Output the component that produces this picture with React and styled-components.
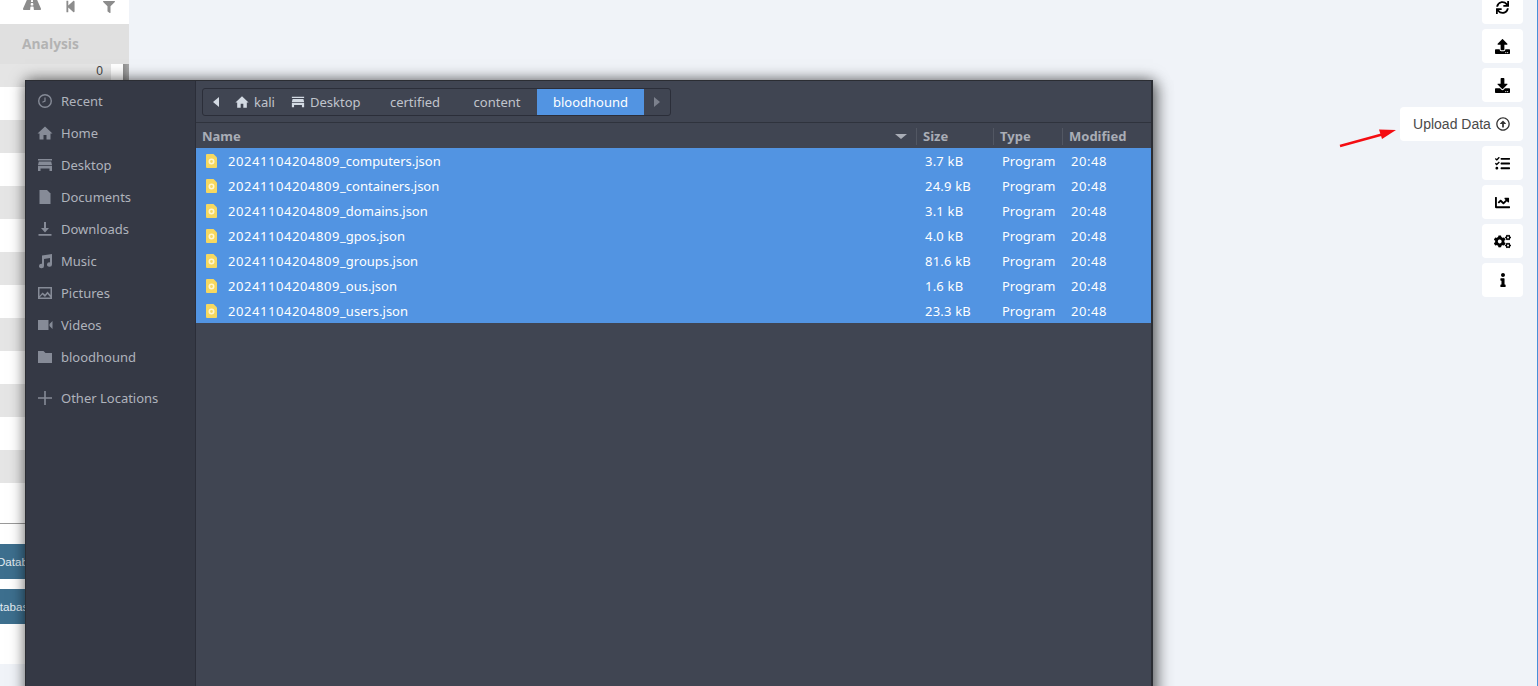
import React from 'react';
import styled, { createGlobalStyle } from 'styled-components';
import {
  FaRoad,
  FaStepBackward,
  FaFilter,
  FaSync,
  FaUpload,
  FaDownload,
  FaRegArrowAltCircleUp,
  FaTasks,
  FaChartLine,
  FaCogs,
  FaInfo,
} from 'react-icons/fa';

const GlobalStyle = createGlobalStyle`
  html, body {
    margin: 0;
    padding: 0;
    background: #f0f3f8;
    overflow: hidden;
  }
`;

const Page = styled.div`
  position: relative;
  display: flex;
  justify-content: space-between;
  align-items: flex-start;
  height: 686px;
  overflow: hidden;
  background: #f0f3f8;
  border-right: 1px solid #4a90d9;
  box-sizing: border-box;
  font-family: "Liberation Sans", Arial, sans-serif;
`;

/* left BloodHound panel */
const Panel = styled.div`
  width: 129px;
  height: 664px;
  background: #fff;
  overflow: hidden;
`;

const IconStrip = styled.div`
  display: flex;
  gap: 23px;
  align-items: flex-end;
  height: 24px;
  padding: 0 14px 11px 23px;
  box-sizing: border-box;
  color: #8c8c8c;

  svg {
    display: block;
    flex: none;
  }

  svg:last-child {
    margin-left: auto;
  }
`;

const PanelTitle = styled.div`
  display: flex;
  align-items: center;
  height: 40px;
  padding: 0 0 2px 22px;
  box-sizing: border-box;
  background: #e0e0e0;
  color: #b3b3b3;
  font-family: "Open Sans", sans-serif;
  font-size: 13.8px;
  font-weight: 700;
`;

const TableArea = styled.div`
  display: flex;
  height: 419px;
`;

const Stripes = styled.div`
  width: 111px;
  flex: none;
`;

const Stripe = styled.div`
  height: ${p => (p.$first ? 23 : 33)}px;
  background: ${p => (p.$gray ? '#e5e5e5' : '#fff')};
  box-sizing: border-box;
  padding: 1px 8px 0 0;
  text-align: right;
  color: #444;
  font-size: 12px;
  line-height: 12px;
`;

const Thumb = styled.div`
  width: 6px;
  height: 20px;
  margin-left: 12px;
  background: linear-gradient(90deg, #8f8f8f, #a8a8a8);
`;

const Divider = styled.div`
  height: 1px;
  margin-top: 40px;
  background: #999;
`;

const DbButtons = styled.div`
  display: flex;
  flex-direction: column;
  gap: 10px;
  padding-top: 20px;
`;

const DbButton = styled.div`
  display: flex;
  align-items: center;
  height: 35px;
  padding-bottom: 1px;
  box-sizing: border-box;
  background: #3d6f8e;
  color: #e4edf3;
  font-size: 11.6px;
  white-space: nowrap;

  span {
    margin-left: ${p => p.$shift}px;
  }
`;

/* right toolbar */
const Toolbar = styled.div`
  display: flex;
  flex-direction: column;
  align-items: flex-end;
  gap: 5px;
  margin-top: -10px;
  padding-right: 14px;
`;

const ToolButton = styled.div`
  display: flex;
  align-items: center;
  justify-content: center;
  gap: 5px;
  width: ${p => (p.$wide ? 123 : 41)}px;
  height: 34px;
  background: #fff;
  border-radius: 4px;
  color: ${p => (p.$wide ? '#4a4a4a' : '#000')};
  font-size: 14px;

  svg {
    color: ${p => (p.$wide ? '#333' : '#000')};
  }
`;

const Arrow = styled.svg`
  position: absolute;
  left: 1338px;
  top: 126px;
`;

/* GTK file chooser lying over the page */
const Dialog = styled.div`
  position: absolute;
  left: 25px;
  top: 80px;
  width: 1128px;
  height: 640px;
  display: flex;
  box-sizing: border-box;
  background: #404552;
  border: 1px solid #2b2d33;
  border-right-width: 2px;
  box-shadow: 0 0 14px rgba(0, 0, 0, 0.55), 6px 4px 14px rgba(0, 0, 0, 0.3);
  font-family: "Noto Sans", sans-serif;
  font-size: 13px;
`;

const Sidebar = styled.nav`
  width: 170px;
  flex: none;
  display: flex;
  flex-direction: column;
  padding-top: 4px;
  box-sizing: border-box;
  background: #353945;
  border-right: 1px solid #2b2e39;
`;

const Place = styled.div`
  display: flex;
  align-items: center;
  gap: 8px;
  height: 32px;
  padding-left: 11px;
  margin-top: ${p => (p.$separated ? 9 : 0)}px;
  color: #afb3bc;
  line-height: 1;

  svg {
    flex: none;
    width: 16px;
    height: 16px;
    fill: #868b97;
  }
`;

const Main = styled.div`
  flex: 1;
  min-width: 0;
`;

const PathArea = styled.div`
  height: 42px;
  padding: 7px 0 0 6px;
  box-sizing: border-box;
  border-bottom: 1px solid #2f333d;
`;

const PathBar = styled.div`
  display: inline-flex;
  height: 28px;
  box-sizing: border-box;
  border: 1px solid #2b2e39;
  border-radius: 3px;
  background: #404552;
`;

const Crumb = styled.div`
  display: flex;
  align-items: center;
  justify-content: ${p => (p.$icon ? 'flex-start' : 'center')};
  gap: 5px;
  width: ${p => p.$w}px;
  padding-left: ${p => p.$icon || 0}px;
  box-sizing: border-box;
  background: ${p => (p.$active ? '#5294e2' : 'transparent')};
  color: ${p => (p.$active ? '#fff' : '#c0c4cc')};

  svg {
    flex: none;
    fill: ${p => (p.$dim ? '#7c818d' : '#d3dae3')};
  }
`;

const Columns = styled.div`
  display: grid;
  grid-template-columns: 721px 77px 69px 1fr;
`;

const HeadRow = styled(Columns)`
  height: 25px;
  padding-top: 1px;
  box-sizing: border-box;
  align-items: center;
  color: #a9adb6;
  font-weight: 700;
`;

const HeadCell = styled.div`
  display: flex;
  align-items: center;
  justify-content: space-between;
  height: 17px;
  padding: 0 9px 0 6px;
  border-right: ${p => (p.$last ? 'none' : '1px solid #525763')};
  line-height: 1;
`;

const SortMark = styled.i`
  width: 0;
  height: 0;
  border-left: 6px solid transparent;
  border-right: 6px solid transparent;
  border-top: 5px solid #a9adb6;
`;

const FileRow = styled(Columns)`
  height: 25px;
  align-items: center;
  background: #5294e2;
  color: #fff;
`;

const NameCell = styled.div`
  display: flex;
  align-items: center;
  gap: 11px;
  padding-left: 10px;
`;

const Cell = styled.div`
  padding-left: 8px;
`;

/* the digits come out wider than the letters in the dialog's hinted font */
const Digits = styled.span`
  letter-spacing: 0.57px;
`;

const SizeCell = styled(Cell)`
  letter-spacing: 0.2px;
`;

const FileIcon = () => (
  <svg width="11" height="14" viewBox="0 0 11 14">
    <path d="M1 0h6.5L11 3.5V13a1 1 0 0 1-1 1H1a1 1 0 0 1-1-1V1a1 1 0 0 1 1-1z" fill="#f6d860" />
    <circle cx="5.5" cy="7.5" r="2.2" fill="none" stroke="#fff6d0" strokeWidth="1.6" />
  </svg>
);

const HomeIcon = ({ size = 16 }) => (
  <svg width={size} height={size} viewBox="0 0 16 16">
    <path d="M8 1.5L15.5 8.5H13.5V14.5H9.5V10H6.5V14.5H2.5V8.5H.5z" />
  </svg>
);

const DesktopIcon = ({ size = 16 }) => (
  <svg width={size} height={size} viewBox="0 0 16 16">
    <path d="M1 2h14v1.5H1zM1.8 4.5h12.4L15 8H1zM1 8.8h14V14h-2.5v-2.5h-9V14H1z" />
  </svg>
);

const places = [
  {
    label: 'Recent',
    icon: (
      <svg viewBox="0 0 16 16">
        <path fillRule="evenodd" d="M8 1a7 7 0 1 1 0 14A7 7 0 0 1 8 1zm0 1.4a5.6 5.6 0 1 0 0 11.2A5.6 5.6 0 0 0 8 2.4z" />
        <path d="M7.4 4.5h1.2v4l-3 1.2-.4-1 2.2-1z" />
      </svg>
    ),
  },
  { label: 'Home', icon: <HomeIcon /> },
  { label: 'Desktop', icon: <DesktopIcon /> },
  {
    label: 'Documents',
    icon: (
      <svg viewBox="0 0 16 16">
        <path d="M2.5 1h7.5l3.5 3.5V15h-11z" />
      </svg>
    ),
  },
  {
    label: 'Downloads',
    icon: (
      <svg viewBox="0 0 16 16">
        <path d="M7 1h2v6h3l-4 4.5L4 7h3zM1.5 13h13v1.8h-13z" />
      </svg>
    ),
  },
  {
    label: 'Music',
    icon: (
      <svg viewBox="0 0 16 16">
        <path d="M5 2.5L15 1v10.5a2.5 2.2 0 1 1-2-2.1V5L7 5.9v7a2.5 2.2 0 1 1-2-2.1z" />
      </svg>
    ),
  },
  {
    label: 'Pictures',
    icon: (
      <svg viewBox="0 0 16 16">
        <path fillRule="evenodd" d="M1 2h14v12H1zM2.5 3.5V11l3-3.5 2.5 2 2.5-3 3 3.5V3.5zM2.5 12.5h11L10.5 9 8 12 5.5 9.5z" />
      </svg>
    ),
  },
  {
    label: 'Videos',
    icon: (
      <svg viewBox="0 0 16 16">
        <path d="M1 3h10.5v10H1zM12.5 7l3-3v8l-3-3z" />
      </svg>
    ),
  },
  {
    label: 'bloodhound',
    icon: (
      <svg viewBox="0 0 16 16">
        <path d="M1 2h5.5l2 2H15v10H1z" />
      </svg>
    ),
  },
  {
    label: 'Other Locations',
    separated: true,
    icon: (
      <svg viewBox="0 0 16 16">
        <path d="M7.2 1h1.6v6.2H15v1.6H8.8V15H7.2V8.8H1V7.2h6.2z" />
      </svg>
    ),
  },
];

const files = [
  ['computers', '3.7 kB'],
  ['containers', '24.9 kB'],
  ['domains', '3.1 kB'],
  ['gpos', '4.0 kB'],
  ['groups', '81.6 kB'],
  ['ous', '1.6 kB'],
  ['users', '23.3 kB'],
];

const stripes = Array.from({ length: 13 }, (_, i) => i);

const App = () => {
  return (
    <Page>
      <GlobalStyle />
      <Panel>
        <IconStrip>
          <FaRoad size={18} />
          <FaStepBackward size={13} />
          <FaFilter size={12} />
        </IconStrip>
        <PanelTitle>Analysis</PanelTitle>
        <TableArea>
          <Stripes>
            {stripes.map(i => (
              <Stripe key={i} $first={i === 0} $gray={i % 2 === 0}>
                {i === 0 ? '0' : ''}
              </Stripe>
            ))}
          </Stripes>
          <Thumb />
        </TableArea>
        <Divider />
        <DbButtons>
          <DbButton $shift={-3}><span>Database</span></DbButton>
          <DbButton $shift={-15}><span>Database</span></DbButton>
        </DbButtons>
      </Panel>

      <Toolbar>
        <ToolButton><FaSync size={13} /></ToolButton>
        <ToolButton><FaUpload size={15} /></ToolButton>
        <ToolButton><FaDownload size={15} /></ToolButton>
        <ToolButton $wide>
          Upload Data <FaRegArrowAltCircleUp size={14} />
        </ToolButton>
        <ToolButton><FaTasks size={15} /></ToolButton>
        <ToolButton><FaChartLine size={15} /></ToolButton>
        <ToolButton><FaCogs size={17} /></ToolButton>
        <ToolButton><FaInfo size={14} /></ToolButton>
      </Toolbar>

      <Arrow width="60" height="24" viewBox="0 0 60 24">
        <path d="M2 20L44 8.5" stroke="#f40d12" strokeWidth="2.4" fill="none" />
        <path d="M58 4L41 3.5L44 13z" fill="#f40d12" />
      </Arrow>

      <Dialog>
        <Sidebar>
          {places.map(p => (
            <Place key={p.label} $separated={p.separated}>
              {p.icon}
              {p.label}
            </Place>
          ))}
        </Sidebar>
        <Main>
          <PathArea>
            <PathBar>
              <Crumb $w={25}>
                <svg width="8" height="10" viewBox="0 0 8 10"><path d="M7 0v10L1 5z" /></svg>
              </Crumb>
              <Crumb $w={54} $icon={7}><HomeIcon size={14} />kali</Crumb>
              <Crumb $w={91} $icon={9}><DesktopIcon size={14} />Desktop</Crumb>
              <Crumb $w={84}>certified</Crumb>
              <Crumb $w={80}>content</Crumb>
              <Crumb $w={107} $active>bloodhound</Crumb>
              <Crumb $w={26} $dim>
                <svg width="8" height="10" viewBox="0 0 8 10"><path d="M1 0v10l6-5z" /></svg>
              </Crumb>
            </PathBar>
          </PathArea>
          <HeadRow>
            <HeadCell>Name<SortMark /></HeadCell>
            <HeadCell>Size</HeadCell>
            <HeadCell>Type</HeadCell>
            <HeadCell $last>Modified</HeadCell>
          </HeadRow>
          {files.map(([name, size]) => (
            <FileRow key={name}>
              <NameCell>
                <FileIcon />
                <span><Digits>20241104204809</Digits>{`_${name}.json`}</span>
              </NameCell>
              <SizeCell>{size}</SizeCell>
              <Cell>Program</Cell>
              <Cell><Digits>20:48</Digits></Cell>
            </FileRow>
          ))}
        </Main>
      </Dialog>
    </Page>
  );
};

export default App;
